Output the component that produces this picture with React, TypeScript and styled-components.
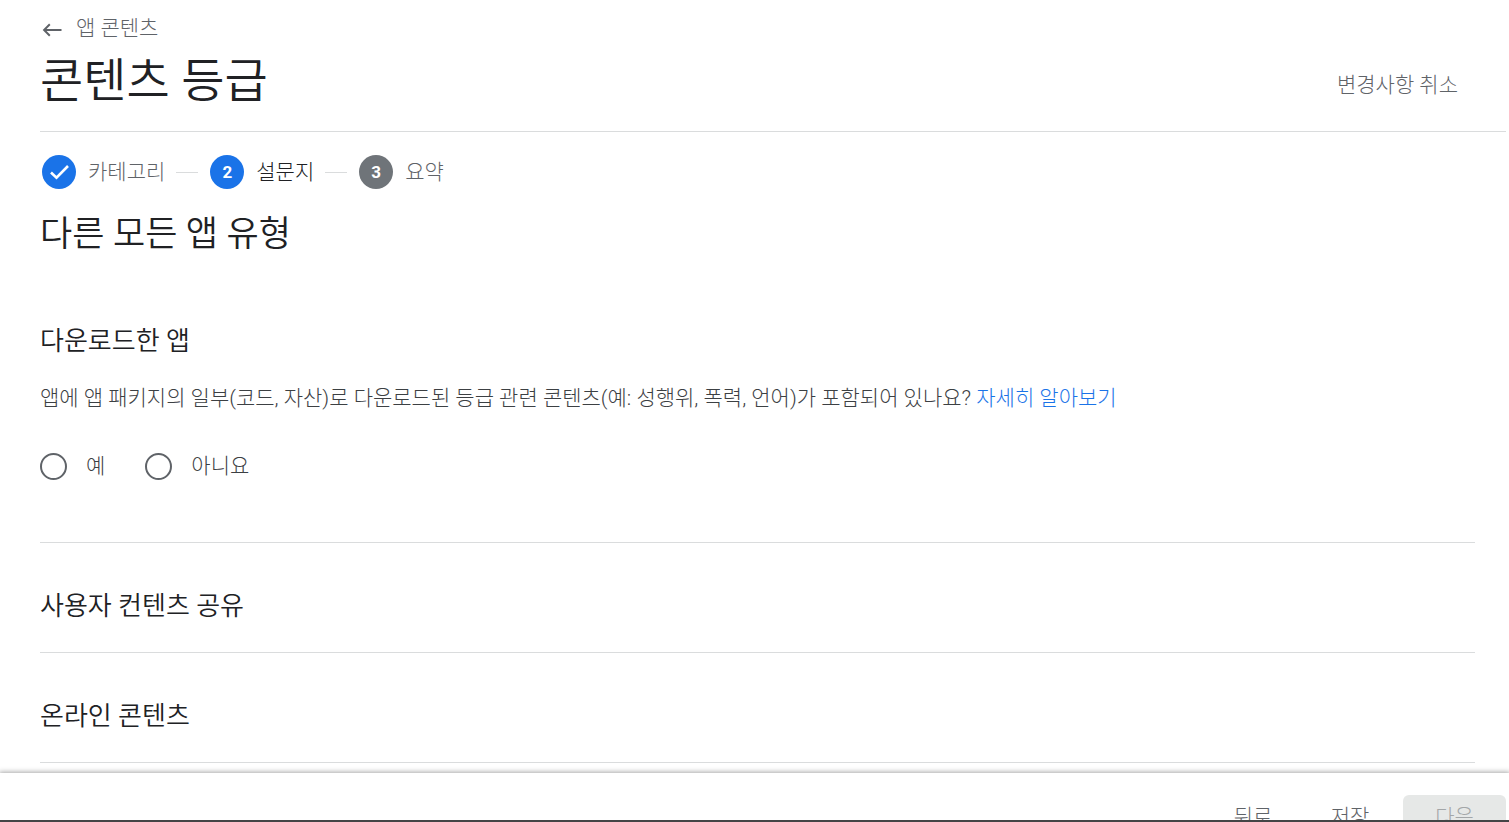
import React from "react";
import styled, { createGlobalStyle } from "styled-components";

const colors = {
  ink: "#202124",
  body: "#3c4043",
  muted: "#5f6368",
  blue: "#1a73e8",
  grey: "#6f7479",
  line: "#dadcdd",
};

const GlobalStyle = createGlobalStyle`
  *, *::before, *::after { box-sizing: border-box; }
  body {
    margin: 0;
    background: #fff;
    color: ${colors.ink};
    font-family: Roboto, "Noto Sans CJK KR", sans-serif;
    font-size: 21px;
    font-weight: 300;
    line-height: 28px;
  }
  h1, h2, h3, p, ol, fieldset { margin: 0; padding: 0; border: 0; font-weight: 350; }
  p, ol { font-weight: inherit; }
  button { font: inherit; }
`;

const Shell = styled.div`
  display: flex;
  flex-direction: column;
  height: 100vh;
`;

const Main = styled.main`
  flex: 1;
  min-height: 0;
  overflow: hidden;
  padding-left: 40px;
`;

const Header = styled.header`
  margin-right: 3px;
  padding: 14px 0 20px;
  border-bottom: 1px solid ${colors.line};
`;

const BackLink = styled.a`
  display: flex;
  width: fit-content;
  align-items: center;
  gap: 12px;
  color: ${colors.muted};
  text-decoration: none;
  svg { display: block; }
`;

const TitleRow = styled.div`
  display: flex;
  align-items: center;
  justify-content: space-between;
  margin-top: 9px;
  padding-right: 48px;
`;

const Title = styled.h1`
  font-size: 47px;
  line-height: 60px;
`;

const TextButton = styled.button`
  padding: 8px 0 0;
  border: 0;
  background: none;
  color: ${colors.muted};
  cursor: pointer;
`;

const Steps = styled.ol`
  display: flex;
  align-items: center;
  margin: 23px 0 22px;
  padding-left: 2px;
  list-style: none;

  li + li::before {
    content: "";
    width: 22px;
    height: 1px;
    margin-left: 11px;
    background: ${colors.line};
  }
`;

const Step = styled.li<{ $current?: boolean }>`
  display: flex;
  align-items: center;
  gap: 12px;
  color: ${(p) => (p.$current ? colors.ink : colors.muted)};
`;

const Badge = styled.span<{ $active?: boolean }>`
  display: flex;
  align-items: center;
  justify-content: center;
  width: 34px;
  height: 34px;
  border-radius: 50%;
  background: ${(p) => (p.$active ? colors.blue : colors.grey)};
  color: #fff;
  font-size: 17px;
  font-weight: 700;
`;

const PageHeading = styled.h2`
  font-size: 35px;
  line-height: 48px;
  margin-bottom: 19px;
`;

const Section = styled.section<{ $open?: boolean }>`
  margin-right: 34px;
  padding: 45px 0 ${(p) => (p.$open ? "62px" : "28px")};
  border-bottom: 1px solid ${colors.line};
`;

const SectionTitle = styled.h3`
  font-size: 26px;
  line-height: 36px;
`;

const Question = styled.p`
  margin-top: 25px;
  color: ${colors.body};
`;

const InfoLink = styled.a`
  color: ${colors.blue};
  text-decoration: none;
`;

const Choices = styled.fieldset`
  display: flex;
  gap: 40px;
  margin-top: 40px;
  font-weight: 300;
`;

const Choice = styled.label`
  display: flex;
  align-items: center;
  gap: 19px;
  color: ${colors.body};
`;

const Radio = styled.input`
  appearance: none;
  width: 27px;
  height: 27px;
  margin: 0;
  border: 2px solid ${colors.muted};
  border-radius: 50%;
  &:checked {
    border-color: ${colors.blue};
    background: radial-gradient(${colors.blue} 0 6px, transparent 7px);
  }
`;

const Footer = styled.footer`
  display: flex;
  height: 49px;
  align-items: flex-start;
  justify-content: flex-end;
  gap: 9px;
  overflow: hidden;
  padding: 22px 3px 0;
  border-bottom: 2px solid #444446;
`;

const FooterEdge = styled.div`
  position: relative;
  box-shadow: 0 0 5px 1px rgba(0, 0, 0, 0.35);
  background: #fff;
`;

const FooterButton = styled.button`
  flex: none;
  min-width: 88px;
  height: 44px;
  padding: 0;
  border: 0;
  border-radius: 6px;
  background: none;
  color: ${colors.muted};
  &:disabled {
    min-width: 103px;
    background: #e6e8e7;
    color: #a3a6a8;
  }
`;

const ArrowIcon = () => (
  <svg width="24" height="24" viewBox="0 0 24 24" fill="none" stroke="currentColor" strokeWidth="2" aria-hidden="true">
    <path d="M21.5 14H4M9.8 8.3L4.1 14l5.7 5.7" />
  </svg>
);

const CheckIcon = () => (
  <svg width="34" height="34" viewBox="0 0 34 34" fill="none" stroke="#fff" strokeWidth="2.6" aria-hidden="true">
    <path d="M9 17.5l5.5 5.2L26 11" />
  </svg>
);

export default function App() {
  return (
    <>
      <GlobalStyle />
      <Shell>
        <Main>
          <Header>
            <BackLink href="#app-content">
              <ArrowIcon />
              앱 콘텐츠
            </BackLink>
            <TitleRow>
              <Title>콘텐츠 등급</Title>
              <TextButton type="button">변경사항 취소</TextButton>
            </TitleRow>
          </Header>

          <Steps>
            <Step>
              <Badge $active>
                <CheckIcon />
              </Badge>
              카테고리
            </Step>
            <Step $current aria-current="step">
              <Badge $active>2</Badge>
              설문지
            </Step>
            <Step>
              <Badge>3</Badge>
              요약
            </Step>
          </Steps>

          <PageHeading>다른 모든 앱 유형</PageHeading>

          <Section $open>
            <SectionTitle>다운로드한 앱</SectionTitle>
            <Question id="downloaded-question">
              앱에 앱 패키지의 일부(코드, 자산)로 다운로드된 등급 관련 콘텐츠(예: 성행위, 폭력, 언어)가 포함되어 있나요?{" "}
              <InfoLink href="#learn-more">자세히 알아보기</InfoLink>
            </Question>
            <Choices aria-labelledby="downloaded-question">
              <Choice>
                <Radio type="radio" name="downloaded" value="yes" />예
              </Choice>
              <Choice>
                <Radio type="radio" name="downloaded" value="no" />
                아니요
              </Choice>
            </Choices>
          </Section>
          <Section>
            <SectionTitle>사용자 컨텐츠 공유</SectionTitle>
          </Section>
          <Section>
            <SectionTitle>온라인 콘텐츠</SectionTitle>
          </Section>
        </Main>
        <FooterEdge>
          <Footer>
            <FooterButton type="button">뒤로</FooterButton>
            <FooterButton type="button">저장</FooterButton>
            <FooterButton type="button" disabled>
              다음
            </FooterButton>
          </Footer>
        </FooterEdge>
      </Shell>
    </>
  );
}
